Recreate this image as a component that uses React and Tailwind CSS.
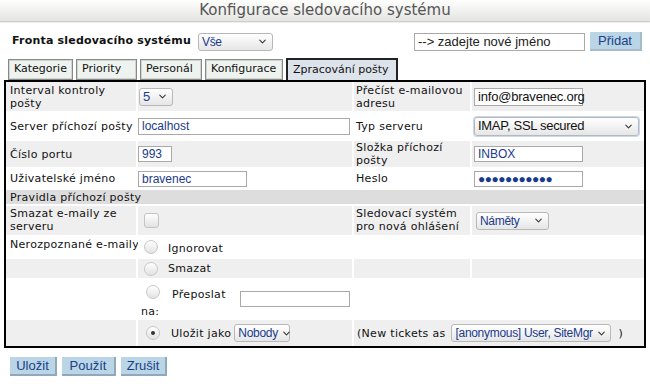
import { ChevronDown } from 'lucide-react';

const label = "font-['DejaVu_Sans',sans-serif] text-[11px] leading-[13px] tracking-[0.3px] text-[#111]";
const field = "font-['Liberation_Sans',Arial,sans-serif] text-[12px] text-[#1a3a8c]";

function Select({ value, className = '' }) {
  return (
    <div
      className={`flex items-center justify-between whitespace-nowrap rounded-[3px] border border-[#b8b8b8] bg-gradient-to-b from-white to-[#e6e6e6] pl-[3px] pr-[4px] tracking-[-0.3px] ${field} ${className}`}
    >
      <span>{value}</span>
      <ChevronDown className="ml-[3px] h-[11px] w-[11px] shrink-0 text-[#333]" strokeWidth={2.2} />
    </div>
  );
}

function Input({ value, className = '' }) {
  return (
    <div className={`flex items-center whitespace-nowrap border border-[#a9a9a9] bg-white pl-[3px] ${field} ${className}`}>
      {value}
    </div>
  );
}

function Radio({ checked }) {
  return (
    <span className="flex h-[14px] w-[14px] shrink-0 items-center justify-center rounded-full border border-[#c8c8c8] bg-gradient-to-b from-white to-[#e2e2e2]">
      {checked ? <span className="h-[4px] w-[4px] rounded-full bg-[#333]" /> : null}
    </span>
  );
}

function Tab({ children, active, className = '' }) {
  const text = "font-['DejaVu_Sans',sans-serif] text-[11px] whitespace-nowrap text-[#111]";
  return (
    <div
      className={
        active
          ? `flex h-[22px] items-center border-2 border-b-0 border-[#222] bg-[#dde3ea] px-[5px] ${text} ${className}`
          : `flex h-[21px] items-center border border-[#888] bg-[#eef3ef] px-[5px] shadow-[inset_0_0_0_1px_#cfd6d0] ${text} ${className}`
      }
    >
      {children}
    </div>
  );
}

function Button({ children, className = '' }) {
  return (
    <button
      className={`h-[19px] border-r-2 border-b-2 border-[#8fa9ba] bg-[#b9d5e6] px-[5px] font-['Liberation_Sans',Arial,sans-serif] text-[13px] leading-none text-[#1c3f86] ${className}`}
    >
      {children}
    </button>
  );
}

const gray = 'bg-[#efefef]';
const white = 'bg-white';

export default function App() {
  return (
    <div className="h-[384px] w-[650px] bg-white">
      <div className="flex h-[22px] items-center justify-center border-b border-[#cfcfcc] bg-gradient-to-b from-[#fefefd] to-[#e4e4e1] shadow-[0_1px_0_#eeeeee]">
        <span className="font-['DejaVu_Sans',sans-serif] text-[15px] text-[#555]">Konfigurace sledovacího systému</span>
      </div>

      <div className="mt-[10px] flex items-center pl-[12px] pr-[8px]">
        <span className="font-['DejaVu_Sans',sans-serif] text-[11px] font-bold tracking-[0.2px] text-[#111]">Fronta sledovacího systému</span>
        <Select value="Vše" className="ml-[7px] h-[18px] w-[75px]" />
        <Input value="--> zadejte nové jméno" className="ml-auto h-[18px] w-[171px] text-[13px] text-[#222]" />
        <Button className="ml-[5px] h-[19px] w-[52px] border-[#a4bccb]">Přidat</Button>
      </div>

      <div className="mt-[7px] flex items-end gap-[3px] pl-[8px]">
        <Tab className="w-[65px]">Kategorie</Tab>
        <Tab className="w-[61px]">Priority</Tab>
        <Tab className="w-[62px]">Personál</Tab>
        <Tab className="w-[78px]">Konfigurace</Tab>
        <Tab active className="w-[112px]">Zpracování pošty</Tab>
      </div>

      <div className="ml-[4px] grid w-[642px] grid-cols-[130px_214px_116px_172px] gap-[2px] border-2 border-black bg-white">
        <div className={`${gray} ${label} h-[29px] pl-[4px] pt-[2px]`}>Interval kontroly pošty</div>
        <div className={`${gray} flex items-center pl-[1px]`}>
          <Select value="5" className="h-[18px] w-[34px] text-[13px]" />
        </div>
        <div className={`${gray} ${label} px-[2px] pt-[2px]`}>Přečíst e-mailovou adresu</div>
        <div className={`${gray} flex items-center pl-[2px]`}>
          <Input value="info@bravenec.org" className="h-[18px] w-[109px] text-[13px] tracking-[-0.2px] text-[#111]" />
        </div>

        <div className={`${white} ${label} flex h-[26px] items-center pl-[4px]`}>Server příchozí pošty</div>
        <div className={`${white} flex items-center`}>
          <Input value="localhost" className="h-[17px] w-[212px]" />
        </div>
        <div className={`${white} ${label} flex items-center px-[2px]`}>Typ serveru</div>
        <div className={`${white} flex items-center pl-[2px]`}>
          <Select
            value="IMAP, SSL secured"
            className="h-[19px] w-[165px] border-[#7ea3d6] text-[13px] text-[#111] shadow-[0_0_0_1px_#c7d9f1]"
          />
        </div>

        <div className={`${gray} ${label} flex h-[26px] items-center pl-[4px]`}>Číslo portu</div>
        <div className={`${gray} flex items-center`}>
          <Input value="993" className="h-[16px] w-[34px]" />
        </div>
        <div className={`${gray} ${label} px-[2px]`}>Složka příchozí pošty</div>
        <div className={`${gray} flex items-center pl-[2px]`}>
          <Input value="INBOX" className="h-[16px] w-[109px]" />
        </div>

        <div className={`${white} ${label} flex h-[19px] items-center pl-[4px]`}>Uživatelské jméno</div>
        <div className={`${white} flex items-center`}>
          <Input value="bravenec" className="h-[16px] w-[109px]" />
        </div>
        <div className={`${white} ${label} flex items-center px-[2px]`}>Heslo</div>
        <div className={`${white} flex items-center pl-[2px]`}>
          <Input value="●●●●●●●●●●●" className="h-[16px] w-[109px] text-[9px] tracking-[-0.5px]" />
        </div>

        <div className={`col-span-4 bg-[#dddddd] ${label} flex h-[14px] items-center pl-[4px]`}>Pravidla příchozí pošty</div>

        <div className={`${gray} ${label} h-[29px] pl-[4px] pt-[1px]`}>Smazat e-maily ze serveru</div>
        <div className={`${gray} flex items-center pl-[6px]`}>
          <span className="h-[15px] w-[15px] rounded-[3px] border border-[#c4c4c4] bg-gradient-to-b from-white to-[#e2e2e2]" />
        </div>
        <div className={`${gray} ${label} px-[2px] pt-[1px]`}>Sledovací systém pro nová ohlášení</div>
        <div className={`${gray} flex items-center pl-[4px]`}>
          <Select value="Náměty" className="h-[18px] w-[73px]" />
        </div>

        <div className={`${white} ${label} h-[20px] whitespace-nowrap pl-[4px] pt-[1px]`}>Nerozpoznané e-maily</div>
        <div className={`${white} flex items-center gap-[10px] pl-[6px] ${label}`}>
          <Radio />
          <span className="pt-[3px]">Ignorovat</span>
        </div>
        <div className={white} />
        <div className={white} />

        <div className={`${gray} h-[19px]`} />
        <div className={`${gray} flex items-center gap-[10px] pl-[6px] ${label}`}>
          <Radio />
          <span>Smazat</span>
        </div>
        <div className={gray} />
        <div className={gray} />

        <div className={`${white} h-[38px]`} />
        <div className={`${white} flex items-start pl-[3px] pt-[5px] ${label}`}>
          <div className="flex flex-col">
            <div className="flex items-start gap-[12px] pl-[5px]">
              <Radio />
              <span className="pt-[3px]">Přeposlat</span>
            </div>
            <span className="mt-[4px]">na:</span>
          </div>
          <Input value="" className="ml-[14px] mt-[6px] h-[16px] w-[110px]" />
        </div>
        <div className={`${white} col-span-2`} />

        <div className={`${gray} h-[26px]`} />
        <div className={`${gray} flex items-center gap-[11px] pl-[8px] ${label}`}>
          <Radio checked />
          <span className="flex items-center gap-[3px]">
            Uložit jako
            <Select value="Nobody" className="h-[18px] w-[56px]" />
          </span>
        </div>
        <div className={`${gray} col-span-2 flex items-center pl-[3px] ${label}`}>
          <span>(New tickets as</span>
          <Select value="[anonymous] User, SiteMgr" className="ml-[6px] h-[18px] w-[160px]" />
          <span className="ml-[7px]">)</span>
        </div>
      </div>

      <div className="mt-[9px] flex gap-[5px] pl-[10px]">
        <Button className="w-[47px]">Uložit</Button>
        <Button className="w-[54px]">Použít</Button>
        <Button className="w-[46px]">Zrušit</Button>
      </div>
    </div>
  );
}
